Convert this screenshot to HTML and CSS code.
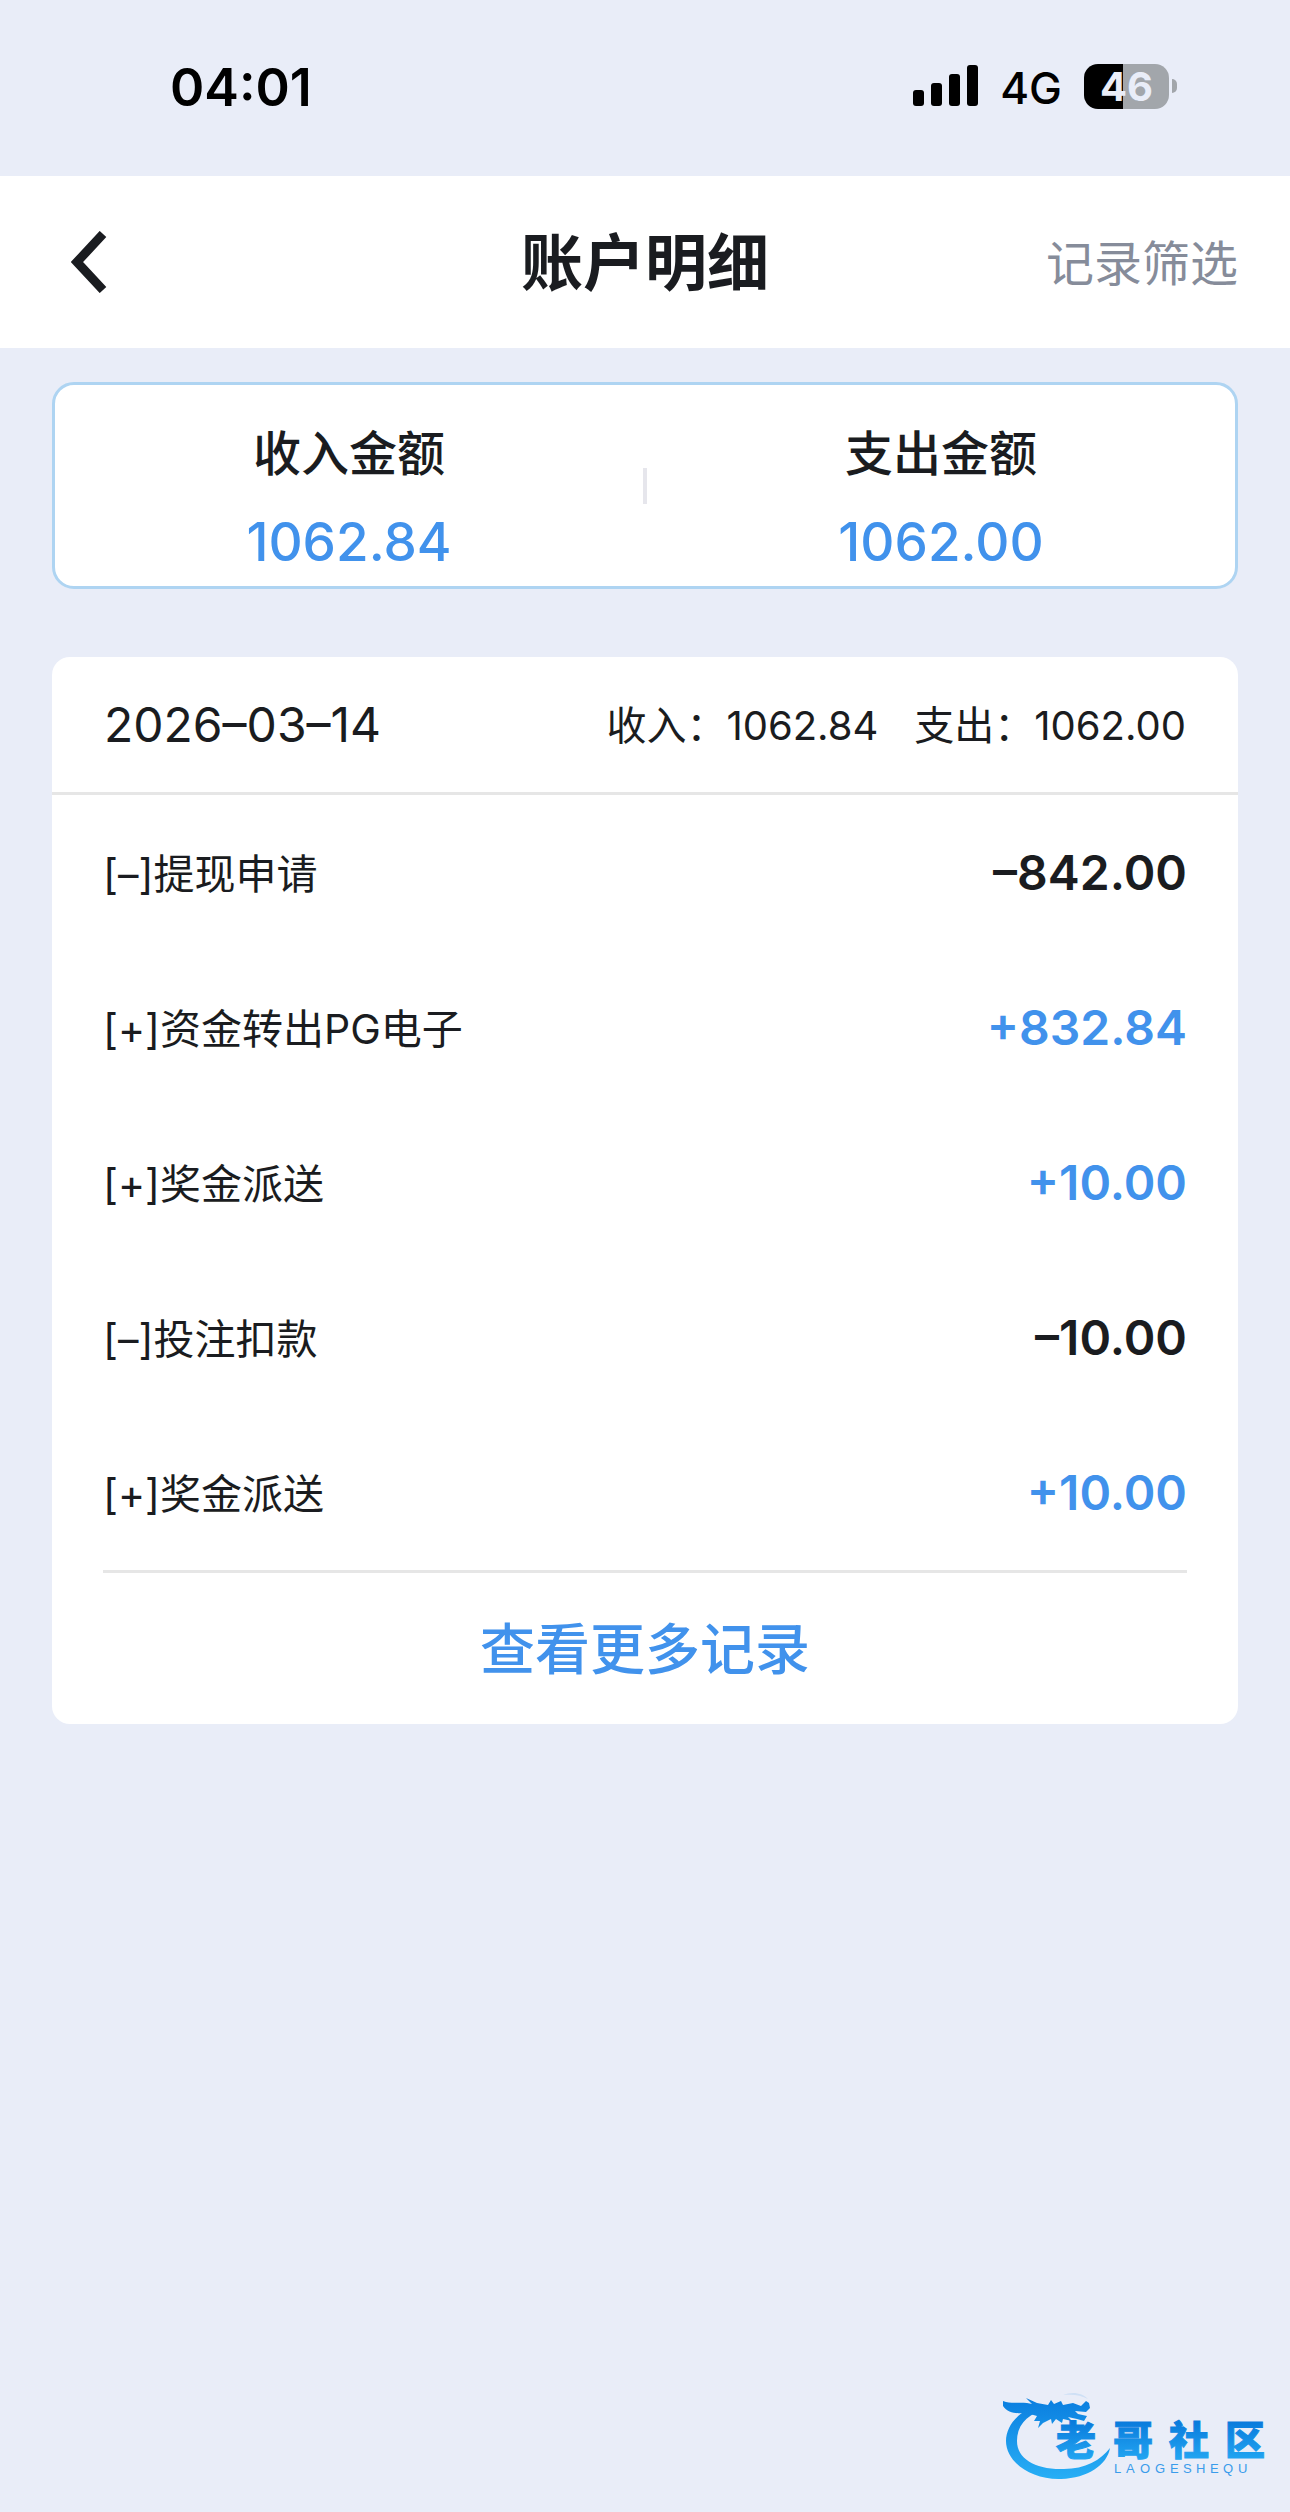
FILE: index.html
```html
<!DOCTYPE html>
<html lang="zh-CN">
<head>
<meta charset="utf-8">
<meta name="viewport" content="width=device-width, initial-scale=1">
<title>账户明细</title>
<link rel="stylesheet" href="styles.css">
</head>
<body>
<div class="status-bar">
  <time class="clock">04:01</time>
  <div class="indicators">
    <svg class="signal" width="65" height="42" viewBox="0 0 65 42" aria-hidden="true">
      <rect x="0" y="25" width="11" height="16" rx="3"/>
      <rect x="18" y="18" width="11" height="23" rx="3"/>
      <rect x="36" y="9" width="11" height="32" rx="3"/>
      <rect x="54" y="0" width="11" height="41" rx="3"/>
    </svg>
    <span class="network">4G</span>
    <span class="battery"><span class="battery-body">46</span><span class="battery-tip"></span></span>
  </div>
</div>

<header class="nav">
  <button class="back" type="button" aria-label="返回">
    <svg width="36" height="62" viewBox="0 0 36 62" aria-hidden="true">
      <path d="M32 3 6 31l26 28" fill="none" stroke="currentColor" stroke-width="9"/>
    </svg>
  </button>
  <h1 class="title">账户明细</h1>
  <button class="filter" type="button">记录筛选</button>
</header>

<main class="content">
  <section class="summary">
    <div class="total">
      <h2 class="total-label">收入金额</h2>
      <p class="total-value">1062.84</p>
    </div>
    <div class="separator"></div>
    <div class="total">
      <h2 class="total-label">支出金额</h2>
      <p class="total-value">1062.00</p>
    </div>
  </section>

  <section class="card">
    <div class="card-head">
      <time class="date">2026–03–14</time>
      <div class="day-totals"><span>收入：1062.84</span><span>支出：1062.00</span></div>
    </div>
    <ul class="records">
      <li class="record"><span class="record-name">[–]提现申请</span><span class="amount">–842.00</span></li>
      <li class="record"><span class="record-name">[+]资金转出PG电子</span><span class="amount amount-in">+832.84</span></li>
      <li class="record"><span class="record-name">[+]奖金派送</span><span class="amount amount-in">+10.00</span></li>
      <li class="record"><span class="record-name">[–]投注扣款</span><span class="amount">–10.00</span></li>
      <li class="record"><span class="record-name">[+]奖金派送</span><span class="amount amount-in">+10.00</span></li>
    </ul>
    <button class="more" type="button">查看更多记录</button>
  </section>
</main>

<svg class="watermark" width="270" height="92" viewBox="0 0 270 92" role="img" aria-label="老哥社区">
  <defs>
    <linearGradient id="ring" gradientUnits="userSpaceOnUse" x1="0" y1="8" x2="0" y2="86">
      <stop offset="0" stop-color="#0b7fe0"/><stop offset="1" stop-color="#27aef5"/>
    </linearGradient>
    <linearGradient id="name" gradientUnits="userSpaceOnUse" x1="0" y1="30" x2="0" y2="68">
      <stop offset="0" stop-color="#0a7bdc"/><stop offset="1" stop-color="#22a6f2"/>
    </linearGradient>
  </defs>
  <g fill="url(#ring)">
    <path d="M36 13C15 19 3 34 3 49c0 21 25 39 55 38 27-1 46-14 49-31-9 12-25 21-46 21C33 78 14 67 14 49c0-14 8-25 25-31z"/>
    <path d="M0 9c8 3 15 1 24 2l5 1-6-6 11 5 11 2 3-5 3 4 7-3 2 4 10-2 8 3 5-5 3 2 1 5-4 4-11-1 3 3 9 2-3 5-7-2-9-2 4 4-9-2-1 4-6-4-4 5-1-5-8 4-5 5 2-7-6 0 3-5-7-2-10 3 2-4c-7 1-15-1-19-7z"/>
    <path d="M60 3c9-4 20-2 25 4-7-4-15-5-25-4z" opacity=".12"/>
  </g>
  <text class="mark-name" x="53 110 166 222" y="63" fill="url(#name)" stroke="url(#name)" stroke-width="1">老哥社区</text>
  <text class="mark-latin" x="111 123 137 152 167 180 193 207 220 235" y="81" fill="#3a9ceb">LAOGESHEQU</text>
</svg>
</body>
</html>
```
FILE: styles.css
```css
* {
  box-sizing: border-box;
}

body {
  position: relative;
  min-height: 100vh;
  margin: 0;
  background: #e9edf8;
  color: #1a1c20;
  font-family: Inter, "Noto Sans CJK SC", sans-serif;
}

h1, h2, p, ul {
  margin: 0;
  padding: 0;
}

button {
  padding: 0;
  border: 0;
  background: none;
  color: inherit;
  font: inherit;
  cursor: pointer;
}

/* Status bar */
.status-bar {
  display: flex;
  align-items: center;
  justify-content: space-between;
  height: 176px;
  padding: 0 113px 4px 170px;
  color: #000;
}

.clock {
  padding-top: 2px;
  font-size: 52px;
  font-weight: 600;
}

.indicators {
  display: flex;
  align-items: center;
  gap: 22px;
}

.network {
  padding-top: 4px;
  font-size: 44px;
  font-weight: 500;
}

.battery {
  display: flex;
  align-items: center;
  gap: 3px;
}

.battery-body {
  width: 85px;
  height: 45px;
  border-radius: 14px;
  background: linear-gradient(90deg, #000 46%, #a2a6ab 46%);
  color: #e9edf8;
  font-size: 40px;
  font-weight: 700;
  line-height: 45px;
  text-align: center;
}

.battery-tip {
  width: 5px;
  height: 14px;
  border-radius: 0 6px 6px 0;
  background: #a2a6ab;
}

/* Navigation */
.nav {
  display: grid;
  grid-template-columns: 1fr auto 1fr;
  align-items: center;
  height: 172px;
  padding: 0 52px;
  background: #fff;
}

.back {
  display: flex;
  justify-self: start;
  padding: 0 19px;
}

.title {
  padding-bottom: 6px;
  font-size: 62px;
  font-weight: 700;
}

.filter {
  justify-self: end;
  padding-bottom: 4px;
  color: #868c9a;
  font-size: 48px;
}

/* Totals */
.content {
  padding: 34px 52px;
}

.summary {
  display: flex;
  align-items: center;
  border: 3px solid #aed4f2;
  border-radius: 22px;
  background: #fff;
}

.total {
  flex: 1;
  padding: 35px 0 10px;
  text-align: center;
}

.total-label {
  font-size: 48px;
  font-weight: 500;
  line-height: 68px;
}

.total-value {
  margin-top: 20px;
  color: #4192ec;
  font-size: 53px;
  font-weight: 500;
  line-height: 68px;
}

.separator {
  width: 4px;
  height: 36px;
  background: #e6e6ec;
}

/* Daily records */
.card {
  margin-top: 68px;
  border-radius: 18px;
  background: #fff;
}

.card-head {
  display: flex;
  align-items: center;
  justify-content: space-between;
  height: 138px;
  padding: 0 52px;
  border-bottom: 3px solid #e6e6e6;
}

.date {
  font-size: 48px;
}

.day-totals {
  display: flex;
  gap: 36px;
  padding-bottom: 4px;
  font-size: 40px;
}

.records {
  margin: 0 51px;
  border-bottom: 3px solid #e6e6e6;
  list-style: none;
}

.record {
  display: flex;
  align-items: center;
  justify-content: space-between;
  height: 155px;
}

.record-name {
  padding-bottom: 4px;
  font-size: 41px;
}

.amount {
  font-size: 48px;
  font-weight: 600;
}

.amount-in,
.more {
  color: #4192ec;
}

.more {
  display: block;
  width: 100%;
  height: 151px;
  padding-bottom: 8px;
  font-size: 55px;
  font-weight: 500;
}

/* Watermark over the page corner */
.watermark {
  position: absolute;
  right: 17px;
  bottom: 28px;
}

.mark-name {
  font-family: "Noto Sans CJK SC", sans-serif;
  font-size: 40px;
  font-weight: 900;
}

.mark-latin {
  font-family: "Liberation Sans", sans-serif;
  font-size: 13px;
}
```
